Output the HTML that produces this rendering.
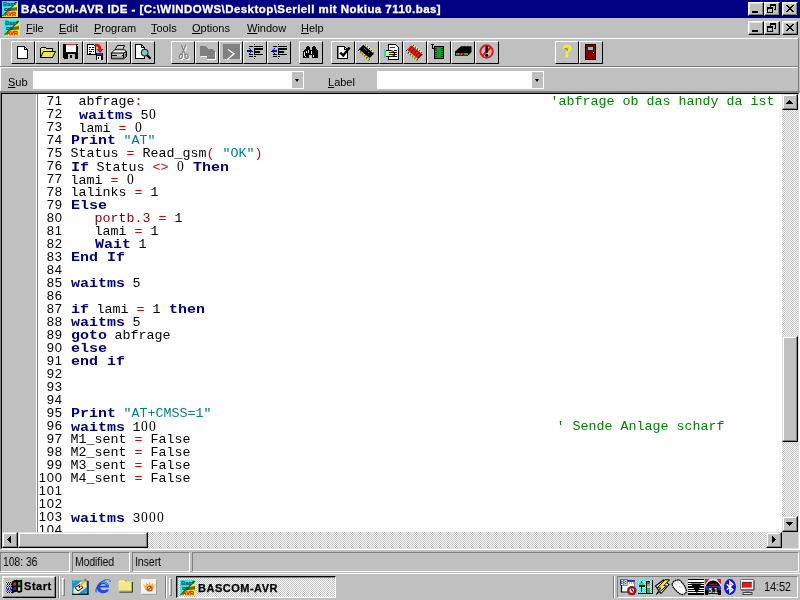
<!DOCTYPE html>
<html><head><meta charset="utf-8"><title>BASCOM-AVR IDE</title>
<style>
*{box-sizing:border-box;margin:0;padding:0}
html,body{width:800px;height:600px;overflow:hidden;background:#c0c0c0;font-family:"Liberation Sans",sans-serif;font-size:11px;color:#000}
.abs,#root div,#root span.abs{position:absolute}
#root{position:relative;width:800px;height:600px;overflow:hidden}
#title{left:0;top:0;width:800px;height:18px;background:#000080}
#title .t{left:20.5px;top:1.5px;color:#fff;-webkit-text-stroke:.3px #fff;font-weight:bold;font-size:11.5px;letter-spacing:.44px;white-space:nowrap;line-height:14px}
.cb{width:16px;height:14px;background:#c0c0c0;border:1px solid;border-color:#fff #000 #000 #fff;box-shadow:inset -1px -1px 0 #808080,inset 1px 1px 0 #dfdfdf}
#menu{left:0;top:18px;width:800px;height:20px}
#menu span{position:absolute;top:4px;line-height:13px;font-size:11px;white-space:nowrap}
#menu span u{text-decoration:underline}
.hl{left:0;width:800px;height:1px}
.tb{width:24px;height:23px;background:#c0c0c0;border:1px solid;border-color:#fff #000 #000 #fff;top:41px}
.tb svg{position:absolute;left:-1px;top:-1px;width:24px;height:23px}
.tb.s1 svg{left:0}
.combo{background:#fff;height:18px;top:71px}
.combo .dd{right:1px;top:1px;width:11px;height:16px;background:#c0c0c0}
.combo .dd:after{content:"";position:absolute;left:3px;top:7px;border:2.5px solid transparent;border-top:3px solid #000;border-bottom:none;width:0;height:0}
#ed{left:0;top:92px;width:800px;height:458px;border:1px solid;border-color:#808080 #fff #fff #808080}
#edi{left:0;top:0;width:798px;height:456px;border:1px solid;border-color:#000 #dfdfdf #dfdfdf #000;background:#fff;overflow:hidden}
#gut{left:0;top:0;width:34px;height:438px;background:#c0c0c0}
#code{left:0;top:0;width:780px;height:438px;overflow:hidden}
.ln{left:0;width:780px;height:13px;line-height:13px;white-space:pre}
.ln .no{position:absolute;right:719.3px;top:0;font-size:13px;letter-spacing:.77px;font-family:"Liberation Sans",sans-serif}
.ln .tx{position:absolute;left:68.5px;top:1px;font-family:"Liberation Mono",monospace;font-size:13.33px}
.tx b{color:#000078;display:inline-block;transform:scaleX(1.125);transform-origin:0 50%}
.tx i{color:#e00000;font-style:normal}
.tx u{color:#008080;text-decoration:none}
.tx s{color:#800000;text-decoration:none}
.tx q{display:inline-block;width:8px;text-align:center;font-family:"Liberation Serif",serif;font-size:13.6px;quotes:none}
.tx q:before,.tx q:after{content:none}
.tx em{position:absolute;top:0;color:#008000;font-style:normal}
.dith{background-image:conic-gradient(#fff 25%,#c0c0c0 0 50%,#fff 0 75%,#c0c0c0 0);background-size:2px 2px}
.sbtn{width:16px;height:16px;background:#c0c0c0;border:1px solid;border-color:#dfdfdf #000 #000 #dfdfdf;box-shadow:inset -1px -1px 0 #808080,inset 1px 1px 0 #fff}
.sp{height:20px;top:552px;border:1px solid;border-color:#808080 #fff #fff #808080}
.sp span{position:absolute;left:2px;top:1.5px;font-size:12px;line-height:14px;white-space:nowrap;transform:scaleX(.86);transform-origin:0 0}
#task{left:0;top:572px;width:800px;height:28px;background:#c0c0c0}
.grip{width:3px;height:18px;top:6px;border:1px solid;border-color:#fff #808080 #808080 #fff}
.etch{width:2px;height:22px;top:4px;border-left:1px solid #808080;border-right:1px solid #fff}
#title .t,#menu span,#code,.lbl,#task span,.sp span{will-change:transform}
</style></head><body><div id="root">

<div id="title">
 <div class="abs" style="left:2px;top:1px;width:16px;height:16px"><svg width="16" height="16" viewBox="0 0 16 16" style="display:block"><rect width="16" height="16" fill="#f4ec28"/><polygon points="0,0 15,0 0,15" fill="#3fe6f2"/><polygon points="8,7.2 15,6 15,9.5 5,10.2" fill="#6a6a10"/><polygon points="11,3 14,0.5 14,3.5" fill="#101010"/><line x1="0.5" y1="15" x2="15" y2="1" stroke="#0a6a6a" stroke-width="1.2"/><text x="1.2" y="4.6" font-family="Liberation Sans" font-weight="bold" font-size="5.6" fill="#056b6b" stroke="#056b6b" stroke-width=".3">Bas</text><text x="2.2" y="9.6" font-family="Liberation Sans" font-weight="bold" font-size="5.6" fill="#0a4a3a" stroke="#0a4a3a" stroke-width=".3">co</text><text x="2.6" y="15.4" font-family="Liberation Sans" font-weight="bold" font-size="5.8" fill="#d82000" stroke="#d83000" stroke-width=".35" textLength="11.5" lengthAdjust="spacingAndGlyphs">AVR</text></svg></div>
 <div class="t">BASCOM-AVR IDE - [C:\WINDOWS\Desktop\Seriell mit Nokiua 7110.bas]</div>
 <div class="cb" style="left:748px;top:2px"><svg width="14" height="12" viewBox="0 0 14 12" shape-rendering="crispEdges" style="position:absolute;left:0;top:0"><rect x="3" y="8" width="6" height="2" fill="#000"/></svg></div>
 <div class="cb" style="left:764px;top:2px"><svg width="14" height="12" viewBox="0 0 14 12" shape-rendering="crispEdges" style="position:absolute;left:0;top:0"><path d="M5,1h6v2h-6zM5,3h1v1h-1zM10,3h1v4h-1zM9,6h1v1h-1z M2,4h6v2h-6z M2,6h1v4h-1z M7,6h1v4h-1z M2,9h6v1h-6z" fill="#000"/></svg></div>
 <div class="cb" style="left:782px;top:2px"><svg width="14" height="12" viewBox="0 0 14 12" shape-rendering="crispEdges" style="position:absolute;left:0;top:0"><path d="M3,2h2v1h-2zM9,2h2v1h-2zM4,3h2v1h-2zM8,3h2v1h-2zM5,4h4v1h-4zM6,5h2v1h-2zM5,6h4v1h-4zM4,7h2v1h-2zM8,7h2v1h-2zM3,8h2v1h-2zM9,8h2v1h-2z" fill="#000"/></svg></div>
</div>

<div id="menu">
 <div class="abs" style="left:4px;top:2px;width:16px;height:16px"><svg width="16" height="16" viewBox="0 0 16 16" style="display:block"><rect width="16" height="16" fill="#f4ec28"/><polygon points="0,0 15,0 0,15" fill="#3fe6f2"/><polygon points="8,7.2 15,6 15,9.5 5,10.2" fill="#6a6a10"/><polygon points="11,3 14,0.5 14,3.5" fill="#101010"/><line x1="0.5" y1="15" x2="15" y2="1" stroke="#0a6a6a" stroke-width="1.2"/><text x="1.2" y="4.6" font-family="Liberation Sans" font-weight="bold" font-size="5.6" fill="#056b6b" stroke="#056b6b" stroke-width=".3">Bas</text><text x="2.2" y="9.6" font-family="Liberation Sans" font-weight="bold" font-size="5.6" fill="#0a4a3a" stroke="#0a4a3a" stroke-width=".3">co</text><text x="2.6" y="15.4" font-family="Liberation Sans" font-weight="bold" font-size="5.8" fill="#d82000" stroke="#d83000" stroke-width=".35" textLength="11.5" lengthAdjust="spacingAndGlyphs">AVR</text></svg></div>
 <span style="left:25.5px"><u>F</u>ile</span>
 <span style="left:58.5px"><u>E</u>dit</span>
 <span style="left:93.5px"><u>P</u>rogram</span>
 <span style="left:151px"><u>T</u>ools</span>
 <span style="left:192px"><u>O</u>ptions</span>
 <span style="left:247px"><u>W</u>indow</span>
 <span style="left:301px"><u>H</u>elp</span>
 <div class="cb" style="left:748px;top:3px"><svg width="14" height="12" viewBox="0 0 14 12" shape-rendering="crispEdges" style="position:absolute;left:0;top:0"><rect x="3" y="8" width="6" height="2" fill="#000"/></svg></div>
 <div class="cb" style="left:764px;top:3px"><svg width="14" height="12" viewBox="0 0 14 12" shape-rendering="crispEdges" style="position:absolute;left:0;top:0"><path d="M5,1h6v2h-6zM5,3h1v1h-1zM10,3h1v4h-1zM9,6h1v1h-1z M2,4h6v2h-6z M2,6h1v4h-1z M7,6h1v4h-1z M2,9h6v1h-6z" fill="#000"/></svg></div>
 <div class="cb" style="left:782px;top:3px"><svg width="14" height="12" viewBox="0 0 14 12" shape-rendering="crispEdges" style="position:absolute;left:0;top:0"><path d="M3,2h2v1h-2zM9,2h2v1h-2zM4,3h2v1h-2zM8,3h2v1h-2zM5,4h4v1h-4zM6,5h2v1h-2zM5,6h4v1h-4zM4,7h2v1h-2zM8,7h2v1h-2zM3,8h2v1h-2zM9,8h2v1h-2z" fill="#000"/></svg></div>
</div>
<div class="hl" style="top:38px;background:#fff"></div>
<div class="abs" style="left:0;top:38px;width:1px;height:28px;background:#fff"></div>

<!-- toolbar -->
<div class="tb" style="left:11px"><svg viewBox="0 0 24 23" shape-rendering="crispEdges"><path d="M6.5,5.5H13.5L16.5,8.5V17.5H6.5Z" fill="#fff" stroke="#000"/><path d="M13.5,5.5V8.5H16.5" fill="none" stroke="#000"/></svg></div>
<div class="tb" style="left:35px"><svg viewBox="0 0 24 23" shape-rendering="crispEdges"><path d="M5.5,16.5V7.5L6.5,6.5H10.5L11.5,7.5H17.5V10.5" fill="#e4e468" stroke="#000"/><path d="M5.5,16.5L8.5,10.5H20.5L17.5,16.5Z" fill="#e4e468" stroke="#000" shape-rendering="auto"/><path d="M5,16.5H18" stroke="#000"/></svg></div>
<div class="tb" style="left:59px"><svg viewBox="0 0 24 23" shape-rendering="crispEdges"><path d="M4,3H19V18H5L4,17Z" fill="#000"/><rect x="7" y="3" width="10" height="8" fill="#fff"/><rect x="7" y="3" width="10" height="1.4" fill="#e03030"/><rect x="9" y="13" width="7" height="5" fill="#c0c0c0"/><rect x="11" y="14" width="2" height="3" fill="#000"/><rect x="17.6" y="4" width="1" height="1.4" fill="#b0b0b0"/></svg></div>
<div class="tb" style="left:83px"><svg viewBox="0 0 24 23" shape-rendering="crispEdges"><path d="M4.5,3.5H10.5L12.5,5.5V13.5H4.5Z" fill="#fff" stroke="#000"/><path d="M6,6h2v1h-2zM9,6h2v1h-2zM6,8h1v1h-1zM8,8h3v1h-3zM6,10h3v1h-3zM10,10h1v1h-1zM6,12h2v0.6h-2z" fill="#000"/><path d="M12,4.3C15.5,3.6 17,5 17,8.4" fill="none" stroke="#e01010" stroke-width="3" shape-rendering="auto"/><polygon points="13.4,8 20.6,8 17,12" fill="#e01010" shape-rendering="auto"/><rect x="12.5" y="11.6" width="7.4" height="7" fill="#000"/><rect x="13.5" y="11.6" width="5.4" height="2" fill="#2828d0"/><rect x="14.4" y="15" width="3.6" height="3.6" fill="#fff"/><rect x="15.2" y="16" width="1" height="2" fill="#000"/></svg></div>
<div class="tb" style="left:107px"><svg viewBox="0 0 24 23" shape-rendering="auto"><polygon points="8,9 10.5,4.5 17.5,4.5 15.5,9" fill="#fff" stroke="#000" stroke-width="1"/><polygon points="4.5,12 7.5,9 17.5,9 19.5,10.5 19.5,15.5 16.5,17.8 4.5,17.8" fill="#c8c8c8" stroke="#000" stroke-width="1"/><polygon points="5.6,11.6 7.8,9.6 17,9.6 18.4,10.6 16.4,11.6" fill="#fff"/><path d="M4.5,12H16.5L19.5,10.5M16.5,12V17.5" fill="none" stroke="#000"/><path d="M5,14.5H16" stroke="#000" stroke-width="1"/><path d="M10,14.5H15" stroke="#e0e040" stroke-width="1.2"/><path d="M5,16.2H16" stroke="#808080"/><path d="M10.5,6H16M10,7.5H15" stroke="#808080" stroke-width=".7"/><path d="M17.6,12.4L19,11.4M17.6,14L19,13M17.6,15.6L19,14.6" stroke="#000" stroke-width=".8"/></svg></div>
<div class="tb" style="left:131px"><svg viewBox="0 0 24 23" shape-rendering="crispEdges"><path d="M4.5,3.5H10.5L13.5,6.5V17.5H4.5Z" fill="#fff" stroke="#000"/><path d="M10.5,3.5V6.5H13.5" fill="none" stroke="#000"/><circle cx="13.7" cy="11.6" r="3.3" fill="#8cc8c4" stroke="#303838" stroke-width="1.2" shape-rendering="auto"/><path d="M16.2,14.3L19.6,17.7" stroke="#000" stroke-width="2.2" shape-rendering="auto"/></svg></div>
<div class="tb" style="left:171px"><svg viewBox="0 0 24 23" shape-rendering="auto"><g fill="none" stroke="#fff" stroke-width="1.1" transform="translate(1,1)"><path d="M10.5,4L12.6,9.5L14.7,4M12.6,9.5L10.8,13.2M12.6,9.5L14.6,13.2"/><ellipse cx="9.9" cy="15.3" rx="1.5" ry="2.3" transform="rotate(15 9.9 15.3)"/><ellipse cx="15.6" cy="15.3" rx="1.5" ry="2.3" transform="rotate(-15 15.6 15.3)"/></g><g fill="none" stroke="#808080" stroke-width="1.2"><path d="M10.5,4L12.6,9.5L14.7,4M12.6,9.5L10.8,13.2M12.6,9.5L14.6,13.2"/><ellipse cx="9.9" cy="15.3" rx="1.5" ry="2.3" transform="rotate(15 9.9 15.3)"/><ellipse cx="15.6" cy="15.3" rx="1.5" ry="2.3" transform="rotate(-15 15.6 15.3)"/></g></svg></div>
<div class="tb s1" style="left:195px"><svg viewBox="0 0 24 23" shape-rendering="crispEdges"><path d="M5,15.5H11.5" stroke="#fff"/><path d="M11,18.5H19.5V11" stroke="#fff" fill="none"/><path d="M4,5H9.5L12,7.5H16L19,10.5V18H10.5V15H4Z" fill="#808080"/></svg></div>
<div class="tb s1" style="left:219px"><svg viewBox="0 0 24 23" shape-rendering="crispEdges"><rect x="3" y="3" width="17" height="15.4" fill="#808080"/><path d="M20.5,3V18.5" stroke="#fff"/><path d="M5,18.2h1v1h-1zM7,18.2h1v1h-1z" fill="#fff"/><path d="M8,8.5L14,12.8L7.6,18.3" fill="none" stroke="#fff" stroke-width="1.3" shape-rendering="auto"/></svg></div>
<div class="tb" style="left:243px"><svg viewBox="0 0 24 23" shape-rendering="crispEdges"><path d="M11,3h1v1h-1zM11,9h1v1h-1zM11,17h1v1h-1zM11,15h1v1h-1zM11,12h1v1h-1z" fill="#000"/><path d="M6,5h4v1h-4zM11,5h9v1h-9zM11,7h9v2h-9zM11,10h6v2h-6zM6,13h4v1h-4zM11,13h9v1h-9zM6,15h4v1h-4zM11,15h2v1h-2z" fill="#000"/><path d="M4,9h3v2h-3zM7,8h1v4h-1zM8,9h1v2h-1zM9,9.5h1v1h-1zM6,7.4h1v.6h-1zM6,12h1v.6h-1z" fill="#1010b0"/></svg></div>
<div class="tb" style="left:267px"><svg viewBox="0 0 24 23" shape-rendering="crispEdges"><path d="M11,3h1v1h-1zM11,9h1v1h-1zM11,17h1v1h-1zM11,15h1v1h-1zM11,12h1v1h-1z" fill="#000"/><path d="M6,5h4v1h-4zM11,5h9v1h-9zM11,7h9v2h-9zM11,10h6v2h-6zM6,13h4v1h-4zM11,13h9v1h-9zM6,15h4v1h-4zM11,15h2v1h-2z" fill="#000"/><path d="M6,9h3.6v2h-3.6zM6,8h1v4h-1zM5,9h1v2h-1zM4,9.5h1v1h-1zM7,7.4h1v.6h-1zM7,12h1v.6h-1z" fill="#1010b0"/></svg></div>
<div class="tb" style="left:299px"><svg viewBox="0 0 24 23" shape-rendering="crispEdges"><path d="M8,5h2v1h-2zM14,5h2v1h-2zM7,6h4v2h-4zM13,6h4v2h-4zM6,8h5v1h-5zM13,8h5v1h-5zM5,9h14v1h-14zM4,10h15v4h-15zM4,14h6v3h-6zM13,14h6v3h-6z" fill="#000"/><path d="M5,11h1v4h-1zM7,10h1v2h-1zM9,9h1v3h-1zM12,10h1v3h-1zM14,14h1v2h-1zM6,15h1v1h-1z" fill="#e8e8e8"/></svg></div>
<div class="tb" style="left:331px"><svg viewBox="0 0 24 23" shape-rendering="crispEdges"><path d="M6.5,5.5H13.5L16.5,8.5V17.5H6.5Z" fill="#fff" stroke="#000"/><path d="M13.5,5.5V8.5H16.5" fill="none" stroke="#000"/><path d="M7,5.5V17" stroke="#808080"/><path d="M9.2,11.6L12.2,14.4L18.6,6.4" fill="none" stroke="#000" stroke-width="2.4" shape-rendering="auto"/></svg></div>
<div class="tb" style="left:355px"><svg viewBox="0 0 24 23" shape-rendering="auto"><polygon points="8.3,3.8 9.9,2.5 20.4,11.3 19,12.7" fill="#f0f0a8" opacity=".9"/><polygon points="3.8,8.3 14.6,17.1 13.2,18.7 2.5,9.8" fill="#e4e450" opacity=".75"/><polygon points="3.8,8.3 8.3,3.8 19,12.7 14.6,17.1" fill="#000"/><rect x="9.70" y="3.50" width="1" height="1" fill="#000"/><rect x="11.85" y="5.30" width="1" height="1" fill="#000"/><rect x="14.00" y="7.10" width="1" height="1" fill="#000"/><rect x="16.15" y="8.90" width="1" height="1" fill="#000"/><rect x="18.30" y="10.70" width="1" height="1" fill="#000"/><rect x="3.00" y="8.70" width="1" height="1" fill="#000"/><rect x="5.15" y="10.50" width="1" height="1" fill="#000"/><rect x="7.30" y="12.30" width="1" height="1" fill="#000"/><rect x="9.45" y="14.10" width="1" height="1" fill="#000"/><rect x="11.60" y="15.90" width="1" height="1" fill="#000"/><rect x="13.75" y="17.70" width="1" height="1" fill="#000"/><rect x="4.60" y="11.60" width="1" height="1" fill="#787800"/><rect x="6.75" y="13.40" width="1" height="1" fill="#787800"/><rect x="8.90" y="15.20" width="1" height="1" fill="#787800"/><rect x="11.05" y="17.00" width="1" height="1" fill="#787800"/><rect x="13.20" y="18.80" width="1" height="1" fill="#787800"/><path d="M9.2,7.2L12,9.6" stroke="#a0a0a0" stroke-width="1" stroke-dasharray="1 .6"/><rect x="13.2" y="11" width="1" height="1" fill="#808080"/></svg></div>
<div class="tb" style="left:379px"><svg viewBox="0 0 24 23" shape-rendering="crispEdges"><path d="M9.5,3.5H16.5L19.5,6.5V18.5H9.5Z" fill="#fff" stroke="#000"/><path d="M11,6h5v1.4h-5z" fill="#2020c0"/><path d="M15,9h3v1h-3zM15,11h3v1h-3zM15,13h3v1h-3zM13,15h5v1h-5z" fill="#000"/><path d="M6.5,9.5H12L14.5,10.5V12H15.5V14.5L13,15.5H6.5Z" fill="#ecec60" stroke="#000" shape-rendering="auto"/><rect x="4.5" y="9" width="2" height="7" fill="#30d0e0"/><path d="M10,11.5h5M10,13.2h5" stroke="#000" stroke-width=".8"/></svg></div>
<div class="tb" style="left:403px"><svg viewBox="0 0 24 23" shape-rendering="auto"><g transform="translate(0,.4)"><polygon points="8.3,3.8 9.9,2.5 20.4,11.3 19,12.7" fill="#f0f0a8" opacity=".9"/><polygon points="3.8,8.3 14.6,17.1 13.2,18.7 2.5,9.8" fill="#e4e450" opacity=".75"/><polygon points="3.8,8.3 8.3,3.8 19,12.7 14.6,17.1" fill="#dc2020"/><rect x="9.70" y="3.50" width="1" height="1" fill="#000"/><rect x="11.85" y="5.30" width="1" height="1" fill="#000"/><rect x="14.00" y="7.10" width="1" height="1" fill="#000"/><rect x="16.15" y="8.90" width="1" height="1" fill="#000"/><rect x="18.30" y="10.70" width="1" height="1" fill="#000"/><rect x="3.00" y="8.70" width="1" height="1" fill="#000"/><rect x="5.15" y="10.50" width="1" height="1" fill="#000"/><rect x="7.30" y="12.30" width="1" height="1" fill="#000"/><rect x="9.45" y="14.10" width="1" height="1" fill="#000"/><rect x="11.60" y="15.90" width="1" height="1" fill="#000"/><rect x="13.75" y="17.70" width="1" height="1" fill="#000"/><rect x="4.60" y="11.60" width="1" height="1" fill="#787800"/><rect x="6.75" y="13.40" width="1" height="1" fill="#787800"/><rect x="8.90" y="15.20" width="1" height="1" fill="#787800"/><rect x="11.05" y="17.00" width="1" height="1" fill="#787800"/><rect x="13.20" y="18.80" width="1" height="1" fill="#787800"/><path d="M6.2,9.2C7.0,6.8 8.6,5.6 10.2,5.6" stroke="#780808" stroke-width="1" fill="none"/><path d="M8.5,11.1C9.3,8.7 10.9,7.5 12.5,7.5" stroke="#780808" stroke-width="1" fill="none"/><path d="M10.8,13.0C11.6,10.6 13.2,9.4 14.8,9.4" stroke="#780808" stroke-width="1" fill="none"/><path d="M13.1,14.9C13.9,12.5 15.5,11.3 17.1,11.3" stroke="#780808" stroke-width="1" fill="none"/><path d="M15.4,16.8C16.2,14.4 17.8,13.2 19.4,13.2" stroke="#780808" stroke-width="1" fill="none"/><path d="M14.6,17.1L19,12.7" stroke="#300" stroke-width="1.2"/></g></svg></div>
<div class="tb" style="left:427px"><svg viewBox="0 0 24 23" shape-rendering="crispEdges"><path d="M4,3.5H7M5.5,3.5V7.5H8" fill="none" stroke="#000"/><rect x="7.5" y="5.5" width="9" height="12" fill="#10a028" stroke="#000"/><path d="M8,7h2v1h-2zM8,9h2v1h-2zM8,11h2v1h-2zM8,13h2v1h-2zM8,15h2v1h-2zM14,7h2v1h-2zM14,9h2v1h-2zM14,11h2v1h-2zM14,13h2v1h-2zM14,15h2v1h-2z" fill="#005010"/></svg></div>
<div class="tb" style="left:451px"><svg viewBox="0 0 24 23" shape-rendering="auto"><polygon points="4,10.5 10,5.2 20.5,5.2 20.5,11 17,14.8 4,14.8" fill="#000"/><path d="M5,13h2.2M13,13h4" stroke="#40e040" stroke-width="1.7"/><path d="M8,13h2M10.6,13h2" stroke="#e83030" stroke-width="1.7"/><path d="M7.2,13h.8M10,13h.6" stroke="#f0c0c0" stroke-width="1.7"/></svg></div>
<div class="tb" style="left:475px"><svg viewBox="0 0 24 23" shape-rendering="auto"><circle cx="11.6" cy="10.5" r="6.2" fill="none" stroke="#e41818" stroke-width="2"/><path d="M7.2,15L16,6.2" stroke="#e41818" stroke-width="2"/><path d="M11.7,5.2v6.4" stroke="#000" stroke-width="2.6"/><circle cx="11.7" cy="14.2" r="1.5" fill="#000"/></svg></div>
<div class="tb" style="left:555px"><svg viewBox="0 0 24 23" shape-rendering="auto"><text x="6.7" y="16.4" font-family="Liberation Sans" font-weight="bold" font-size="16.5" fill="#f4f020" stroke="#f4f020" stroke-width=".5">?</text><path d="M9.4,7.6h2.8v2.4" fill="none" stroke="#808070" stroke-width="1"/></svg></div>
<div class="tb" style="left:579px"><svg viewBox="0 0 24 23" shape-rendering="crispEdges"><rect x="6.5" y="3.5" width="10" height="15" fill="#800000" stroke="#000"/><rect x="9" y="6" width="5" height="3" fill="#30e0e8"/><rect x="14" y="11" width="1" height="1" fill="#fff"/></svg></div>
<div class="hl" style="top:66px;background:#808080"></div>
<div class="hl" style="top:67px;background:#fff"></div>

<div class="abs" style="left:798px;top:38px;width:1px;height:54px;background:#808080"></div>
<div class="abs" style="left:799px;top:38px;width:1px;height:54px;background:#c0c0c0"></div>
<!-- sub/label row -->
<span class="abs lbl" style="left:8px;top:75.5px;font-size:11px;line-height:13px"><u>S</u>ub</span>
<div class="combo" style="left:33px;width:271px"><div class="dd"></div></div>
<span class="abs lbl" style="left:328px;top:75.5px;font-size:11px;line-height:13px"><u>L</u>abel</span>
<div class="combo" style="left:377px;width:167px"><div class="dd"></div></div>

<div class="hl" style="top:91px;background:#808080"></div>
<div class="abs" style="left:0;top:68px;width:1px;height:23px;background:#fff"></div>
<!-- editor -->
<div id="ed"><div id="edi">
 <div id="gut"></div><div style="left:35px;top:0;width:1px;height:438px;background:#808080"></div>
 <div id="code">
<div class="ln" style="top:0px"><span class="no">71</span><span class="tx"> abfrage<i>:</i><em style="left:480px">'abfrage ob das handy da ist</em></span></div>
<div class="ln" style="top:13px"><span class="no">72</span><span class="tx"> <b style="margin-right:6px">waitms</b> 5<q>0</q></span></div>
<div class="ln" style="top:26px"><span class="no">73</span><span class="tx"> lami <i>=</i> <q>0</q></span></div>
<div class="ln" style="top:39px"><span class="no">74</span><span class="tx"><b style="margin-right:5px">Print</b> <u>"AT"</u></span></div>
<div class="ln" style="top:52px"><span class="no">75</span><span class="tx">Status <i>=</i> Read_gsm<i>(</i> <u>"OK"</u><i>)</i></span></div>
<div class="ln" style="top:65px"><span class="no">76</span><span class="tx"><b style="margin-right:2px">If</b> Status <i>&lt;&gt;</i> <q>0</q> <b style="margin-right:4px">Then</b></span></div>
<div class="ln" style="top:78px"><span class="no">77</span><span class="tx">lami <i>=</i> <q>0</q></span></div>
<div class="ln" style="top:91px"><span class="no">78</span><span class="tx">lalinks <i>=</i> 1</span></div>
<div class="ln" style="top:104px"><span class="no">79</span><span class="tx"><b style="margin-right:4px">Else</b></span></div>
<div class="ln" style="top:117px"><span class="no">80</span><span class="tx">   <s>portb</s><i>.</i><s>3</s> <i>=</i> 1</span></div>
<div class="ln" style="top:130px"><span class="no">81</span><span class="tx">   lami <i>=</i> 1</span></div>
<div class="ln" style="top:143px"><span class="no">82</span><span class="tx">   <b style="margin-right:4px">Wait</b> 1</span></div>
<div class="ln" style="top:156px"><span class="no">83</span><span class="tx"><b style="margin-right:6px">End If</b></span></div>
<div class="ln" style="top:169px"><span class="no">84</span><span class="tx"></span></div>
<div class="ln" style="top:182px"><span class="no">85</span><span class="tx"><b style="margin-right:6px">waitms</b> 5</span></div>
<div class="ln" style="top:195px"><span class="no">86</span><span class="tx"></span></div>
<div class="ln" style="top:208px"><span class="no">87</span><span class="tx"><b style="margin-right:2px">if</b> lami <i>=</i> 1 <b style="margin-right:4px">then</b></span></div>
<div class="ln" style="top:221px"><span class="no">88</span><span class="tx"><b style="margin-right:6px">waitms</b> 5</span></div>
<div class="ln" style="top:234px"><span class="no">89</span><span class="tx"><b style="margin-right:4px">goto</b> abfrage</span></div>
<div class="ln" style="top:247px"><span class="no">90</span><span class="tx"><b style="margin-right:4px">else</b></span></div>
<div class="ln" style="top:260px"><span class="no">91</span><span class="tx"><b style="margin-right:6px">end if</b></span></div>
<div class="ln" style="top:273px"><span class="no">92</span><span class="tx"></span></div>
<div class="ln" style="top:286px"><span class="no">93</span><span class="tx"></span></div>
<div class="ln" style="top:299px"><span class="no">94</span><span class="tx"></span></div>
<div class="ln" style="top:312px"><span class="no">95</span><span class="tx"><b style="margin-right:5px">Print</b> <u>"AT+CMSS=1"</u></span></div>
<div class="ln" style="top:325px"><span class="no">96</span><span class="tx"><b style="margin-right:6px">waitms</b> 1<q>0</q><q>0</q><em style="left:486px">' Sende Anlage scharf</em></span></div>
<div class="ln" style="top:338px"><span class="no">97</span><span class="tx">M1_sent <i>=</i> False</span></div>
<div class="ln" style="top:351px"><span class="no">98</span><span class="tx">M2_sent <i>=</i> False</span></div>
<div class="ln" style="top:364px"><span class="no">99</span><span class="tx">M3_sent <i>=</i> False</span></div>
<div class="ln" style="top:377px"><span class="no">100</span><span class="tx">M4_sent <i>=</i> False</span></div>
<div class="ln" style="top:390px"><span class="no">101</span><span class="tx"></span></div>
<div class="ln" style="top:403px"><span class="no">102</span><span class="tx"></span></div>
<div class="ln" style="top:416px"><span class="no">103</span><span class="tx"><b style="margin-right:6px">waitms</b> 3<q>0</q><q>0</q><q>0</q></span></div>
<div class="ln" style="top:429px"><span class="no">104</span><span class="tx"></span></div>
 </div>
 <!-- vscroll -->
 <div class="dith" style="left:780px;top:0;width:16px;height:438px"></div>
 <div class="sbtn" style="left:780px;top:0"><svg width="14" height="14" viewBox="0 0 14 14" shape-rendering="crispEdges" style="position:absolute;left:0;top:0"><path d="M6,5h1v1h-1zM5,6h3v1h-3zM4,7h5v1h-5zM3,8h7v1h-7z" fill="#000"/></svg></div>
 <div class="sbtn" style="left:780px;top:242px;height:106px"></div>
 <div class="sbtn" style="left:780px;top:422px"><svg width="14" height="14" viewBox="0 0 14 14" shape-rendering="crispEdges" style="position:absolute;left:0;top:0"><path d="M3,5h7v1h-7zM4,6h5v1h-5zM5,7h3v1h-3zM6,8h1v1h-1z" fill="#000"/></svg></div>
 <!-- hscroll -->
 <div class="dith" style="left:0;top:438px;width:780px;height:16px"></div>
 <div class="sbtn" style="left:0;top:438px"><svg width="14" height="14" viewBox="0 0 14 14" shape-rendering="crispEdges" style="position:absolute;left:0;top:0"><path d="M7,3h1v7h-1zM6,4h1v5h-1zM5,5h1v3h-1zM4,6h1v1h-1z" fill="#000"/></svg></div>
 <div class="sbtn" style="left:16px;top:438px;width:130px"></div>
 <div class="sbtn" style="left:764px;top:438px"><svg width="14" height="14" viewBox="0 0 14 14" shape-rendering="crispEdges" style="position:absolute;left:0;top:0"><path d="M5,3h1v7h-1zM6,4h1v5h-1zM7,5h1v3h-1zM8,6h1v1h-1z" fill="#000"/></svg></div>
 <div style="left:780px;top:438px;width:16px;height:16px;background:#c0c0c0"></div>
</div></div>

<!-- status bar -->
<div class="sp" style="left:0;width:70px"><span>108: 36</span></div>
<div class="sp" style="left:72px;width:58px"><span>Modified</span></div>
<div class="sp" style="left:132px;width:58px"><span>Insert</span></div>
<div class="sp" style="left:192px;width:607px"></div>

<!-- taskbar -->
<div id="task">
 <div class="hl" style="top:1px;background:#fff"></div>
 <div class="abs" style="left:2px;top:4px;width:54px;height:22px;border:1px solid;border-color:#fff #000 #000 #fff;box-shadow:inset -1px -1px 0 #808080,inset 1px 1px 0 #dfdfdf">
   <div class="abs" style="left:3px;top:2px;width:16px;height:16px"><svg width="17" height="16" viewBox="0 0 17 16" style="position:absolute;left:0;top:0"><g shape-rendering="crispEdges"><path d="M1,4h1v1h-1zM3,4h1v1h-1zM5,4h1v1h-1zM0,6h1v1h-1zM2,6h1v1h-1zM4,6h1v1h-1z" fill="#e02020"/><path d="M1,5h1v1h-1zM3,5h1v1h-1zM5,5h1v1h-1zM1,7h1v1h-1zM3,7h1v1h-1zM5,7h1v1h-1zM1,13h1v1h-1zM3,13h1v1h-1zM5,13h1v1h-1zM0,3h1v1h-1zM2,3h1v1h-1zM4,3h1v1h-1z" fill="#000"/><path d="M0,9h1v1h-1zM2,9h1v1h-1zM4,9h1v1h-1zM1,11h1v1h-1zM3,11h1v1h-1zM5,11h1v1h-1zM1,10h2v1h-2zM4,10h2v1h-2z" fill="#2020e0"/><path d="M0,8h1v1h-1zM2,8h1v1h-1zM4,8h1v1h-1zM0,12h1v1h-1zM2,12h1v1h-1zM4,12h1v1h-1z" fill="#e02020"/></g><path d="M5.800,3C7.800,1 10,0.300 12,1C13.500,1.500 14.600,1.200 16.200,0.400V12.800C14.500,13.800 13.200,14 11.800,13.400C10,12.700 8,13.200 5.800,14.800Z" fill="#000"/><path d="M7.300,4C8.300,3.300 9.300,3.100 10.300,3.200V6.200C9.300,6.100 8.300,6.400 7.300,7Z" fill="#e82020"/><path d="M12.200,3C13,3.200 13.600,3.100 14.300,2.800V6.200C13.600,6.500 13,6.600 12.200,6.400Z" fill="#20d020"/><path d="M7.300,8.800C8.300,8.100 9.300,7.900 10.300,8V11C9.300,10.900 8.300,11.200 7.300,11.800Z" fill="#2020e8"/><path d="M12.200,8.100C13,8.300 13.600,8.200 14.300,7.900V11.600C13.600,11.900 13,12 12.200,11.800Z" fill="#f0f020"/></svg></div>
   <span class="abs" style="left:21px;top:3px;font-weight:bold;font-size:11px;line-height:13px;letter-spacing:.55px;-webkit-text-stroke:.25px #000">Start</span>
 </div>
 <div class="etch" style="left:58px"></div><div class="grip" style="left:62px"></div>
 <div class="abs" style="left:72px;top:6px;width:16px;height:16px"><svg width="17" height="17" viewBox="0 0 17 17" style="position:absolute;left:0;top:0"><rect x="0" y="2.500" width="16" height="14" fill="#2094cc"/><path d="M0,16.500H16V3" fill="none" stroke="#101820" stroke-width="1.400"/><polygon points="1.500,10 9,3.500 14.500,3.500 14.500,9 6.500,15.500 1.500,15.500" fill="#f4ecc0"/><polygon points="3,9.500 8,6.500 11,9.500 6,13" fill="#fff" stroke="#000" stroke-width="1"/><path d="M7.500,8.500L13.600,1.800" stroke="#f0b020" stroke-width="2"/><path d="M12.800,2.600L14,1.200" stroke="#e05020" stroke-width="2"/><path d="M6.800,9.400L7.800,8.200" stroke="#000" stroke-width="1.600"/><path d="M1.500,4h1v1h-1zM13.500,14h1v1h-1zM1.500,14h1v1h-1z" fill="#80d0f0"/></svg></div>
 <div class="abs" style="left:95px;top:6px;width:16px;height:16px"><svg width="17" height="17" viewBox="0 0 17 17" style="position:absolute;left:0;top:0"><path d="M13.800,9.600H5.200C5.400,12.400 9.200,13.200 11,11.400H14C12.600,15.600 6.400,16.400 3.400,13.400C0.600,10.400 2,5.200 6.400,3.800C10.800,2.600 14.600,5.600 13.800,9.600ZM5.300,7.700H11C10.600,5.400 6,5.300 5.300,7.700Z" fill="#1c4cd8"/><path d="M6,4.600C8.500,3.600 11.500,4.600 12.600,7" fill="none" stroke="#48a8f0" stroke-width="1.300"/><path d="M1.400,14.600C-0.500,11 4,4 10,2C13,1 15.600,1.600 15.200,4" fill="none" stroke="#2858d8" stroke-width="1.100"/><path d="M11,2C13,1.200 15,1.600 15.200,3.400" fill="none" stroke="#58b0f0" stroke-width="1"/></svg></div>
 <div class="abs" style="left:118px;top:6px;width:16px;height:16px"><svg width="17" height="17" viewBox="0 0 17 17" style="position:absolute;left:0;top:0"><path d="M1.500,14.600V3.500L2.600,2.200H7L8.600,4H14.800V14.600Z" fill="#101008"/><path d="M0.600,13.400V3.200L1.800,1.900H6.400L7.800,3.500H13.800V13.400Z" fill="#f2ea84"/><path d="M0.800,13H13.600V4" fill="none" stroke="#b8b050" stroke-width="1"/><path d="M1.200,3.600H7.600" stroke="#fffad0" stroke-width=".8"/></svg></div>
 <div class="abs" style="left:141px;top:6px;width:16px;height:16px"><svg width="17" height="17" viewBox="0 0 17 17" style="position:absolute;left:0;top:0"><rect x="0" y="1" width="15.600" height="15.400" fill="#f4f2f0"/><path d="M0.500,16.300H15.500V1.500" fill="none" stroke="#a0a0a0" stroke-width="1"/><path d="M2,6L4.600,8.200L5.200,4.200L7.400,7.200L8.600,3.600L10,7.200L12.200,4.400L12,8.200L15,5.600L12.400,11.600C11,14.200 5.600,14.200 4.400,11.600Z" fill="#f4b038"/><circle cx="8.600" cy="10.600" r="2.400" fill="#fbe6c0" stroke="#dc3c28" stroke-width="1.100"/><path d="M7,12.200L10.200,9" stroke="#dc3c28" stroke-width="1.100"/></svg></div>
 <div class="etch" style="left:165px"></div><div class="grip" style="left:169px"></div>
 <div class="abs dith" style="left:176px;top:4px;width:160px;height:22px;border:1px solid;border-color:#000 #fff #fff #000;box-shadow:inset 1px 1px 0 #808080">
   <div class="abs" style="left:3px;top:3px;width:16px;height:16px"><svg width="16" height="16" viewBox="0 0 16 16" style="display:block"><rect width="16" height="16" fill="#f4ec28"/><polygon points="0,0 15,0 0,15" fill="#3fe6f2"/><polygon points="8,7.2 15,6 15,9.5 5,10.2" fill="#6a6a10"/><polygon points="11,3 14,0.5 14,3.5" fill="#101010"/><line x1="0.5" y1="15" x2="15" y2="1" stroke="#0a6a6a" stroke-width="1.2"/><text x="1.2" y="4.6" font-family="Liberation Sans" font-weight="bold" font-size="5.6" fill="#056b6b" stroke="#056b6b" stroke-width=".3">Bas</text><text x="2.2" y="9.6" font-family="Liberation Sans" font-weight="bold" font-size="5.6" fill="#0a4a3a" stroke="#0a4a3a" stroke-width=".3">co</text><text x="2.6" y="15.4" font-family="Liberation Sans" font-weight="bold" font-size="5.8" fill="#d82000" stroke="#d83000" stroke-width=".35" textLength="11.5" lengthAdjust="spacingAndGlyphs">AVR</text></svg></div>
   <span class="abs" style="left:21px;top:5px;font-weight:bold;font-size:11px;line-height:13px;letter-spacing:.5px;-webkit-text-stroke:.25px #000">BASCOM-AVR</span>
 </div>
 <div class="etch" style="left:613px"></div>
 <div class="abs" style="left:617px;top:4px;width:181px;height:22px;border:1px solid;border-color:#808080 #fff #fff #808080"></div>
 <div class="abs" style="left:620px;top:7px;width:17px;height:17px"><svg width="17" height="17" viewBox="0 0 17 17" style="position:absolute;left:0;top:0"><rect x="1.500" y="2.500" width="13" height="10.500" fill="#fff"/><path d="M1.500,6V13H8" fill="none" stroke="#000" stroke-width="1.200"/><path d="M14.600,3V8" stroke="#808080" stroke-width="1"/><rect x="7.400" y="1" width="7.400" height="1.900" fill="#2030a8"/><path d="M9,3.500h1v1h-1zM11,3.500h1v1h-1zM13,3.500h1v1h-1z" fill="#4050c0"/><rect x="0" y=".500" width="7.600" height="6" fill="#101030"/><text x=".300" y="5.700" font-family="Liberation Sans" font-weight="bold" font-size="6.400" fill="#fff" textLength="7" lengthAdjust="spacingAndGlyphs">38</text><circle cx="11.800" cy="11.600" r="3.500" fill="#fff" stroke="#a80c18" stroke-width="2.400"/><path d="M11.800,11.600V9.600M11.800,11.600L13.400,12.400" stroke="#000" stroke-width="1.100" fill="none"/><path d="M9.200,15.600L10,14.400M14.400,15.600L13.600,14.400" stroke="#a80c18" stroke-width="1.400"/></svg></div>
 <div class="abs" style="left:637px;top:7px;width:17px;height:17px"><svg width="17" height="17" viewBox="0 0 17 17" style="position:absolute;left:0;top:0"><defs><pattern id="cy" width="2" height="2" patternUnits="userSpaceOnUse"><rect width="2" height="2" fill="#fff"/><rect width="1" height="1" fill="#30e0e8"/><rect x="1" y="1" width="1" height="1" fill="#30e0e8"/></pattern></defs><g shape-rendering="crispEdges"><rect x="1" y="1" width="14" height="14" fill="url(#cy)"/><path d="M1,15h15v-14h-1v13h-14z" fill="#000"/><rect x="4" y="2" width="1" height="11" fill="#000"/><rect x="2" y="6" width="6" height="1.600" fill="#000"/><rect x="2" y="4.400" width="5" height="1.800" fill="#48e020"/><rect x="9" y="2" width="1" height="12" fill="#000"/><rect x="9" y="2" width="4" height="1" fill="#000"/><rect x="10" y="3" width="3" height="2" fill="#e02828"/><rect x="10" y="5" width="3" height="2" fill="#f08020"/><rect x="10" y="7" width="3" height="2" fill="#e8e020"/><rect x="10" y="9" width="3" height="5" fill="#30b030"/></g></svg></div>
 <div class="abs" style="left:654px;top:7px;width:17px;height:17px"><svg width="17" height="17" viewBox="0 0 17 17" style="position:absolute;left:0;top:0"><polygon points="1.500,7 9.500,1 15,5.500 7,14.500" fill="#fff" stroke="#000" stroke-width="1.100"/><polygon points="11,0.800 15.600,0.800 9.800,6.600 12.600,7 2.400,15.400 6.600,9 3.400,8.600" fill="#f4f020" stroke="#000" stroke-width="1"/><path d="M8,6.500L6.500,8" stroke="#c09010" stroke-width="1"/></svg></div>
 <div class="abs" style="left:671px;top:7px;width:17px;height:17px"><svg width="17" height="17" viewBox="0 0 17 17" style="position:absolute;left:0;top:0"><path d="M1,5.400C1.600,2.400 5.600,0.200 8.600,1.200C11.600,3.400 16,10 15.200,13C14.400,15.400 11.600,16 9.600,15.200C6.600,13.600 1.600,8.400 1,5.400Z" fill="#fff" stroke="#000" stroke-width="1.300" stroke-dasharray="1.800 .5"/><path d="M3,3.600L6,6.400M5.600,2L8.200,4.600" stroke="#b0b0b0" stroke-width=".9"/><path d="M8.600,7.400l1,1" stroke="#606060" stroke-width="1"/></svg></div>
 <div class="abs" style="left:688px;top:7px;width:17px;height:17px"><svg width="17" height="17" viewBox="0 0 17 17" shape-rendering="crispEdges" style="position:absolute;left:0;top:0"><rect x="0" y="0" width="16" height="16" fill="#fff"/><path d="M0,0h16v1.400h-16zM0,2.500h16v1.300h-16zM0,5h16v1.300h-16zM0,7.300h16v1.300h-16zM0,9.600h16v1.300h-16zM0,11.900h16v1.300h-16zM0,14.200h16v1.300h-16z" fill="#000"/><polygon points="2.800,4.400 13.600,4.400 9.400,13.800 8.400,13.800" fill="#000" shape-rendering="auto"/></svg></div>
 <div class="abs" style="left:705px;top:7px;width:17px;height:17px"><svg width="17" height="17" viewBox="0 0 17 17" style="position:absolute;left:0;top:0"><rect x="0" y="0" width="16" height="7" fill="#e8e0e0"/><polygon points="0,0 4.500,0 0,5.500" fill="#e02020"/><polygon points="16,0 11.500,0 16,5.500" fill="#e02020"/><path d="M0.500,7.500C2,3.500 5,1.500 8,1.500C11,1.500 14,3.500 15.500,7.500Z" fill="#000"/><path d="M4,5.200H12" stroke="#b01818" stroke-width="1.300"/><rect x="0" y="7.400" width="16" height="5.400" fill="#2030d0"/><rect x="0" y="11" width="3.200" height="5" fill="#000"/><rect x="12.800" y="11" width="3.200" height="5" fill="#000"/><rect x="3.200" y="8.400" width="10" height="6.600" fill="#101020"/><text x="3.600" y="14.400" font-family="Liberation Sans" font-weight="bold" font-size="7.200" fill="#f0f0c0" textLength="9" lengthAdjust="spacingAndGlyphs">5.1</text></svg></div>
 <div class="abs" style="left:722px;top:7px;width:17px;height:17px"><svg width="17" height="17" viewBox="0 0 17 17" style="position:absolute;left:0;top:0"><ellipse cx="8" cy="8" rx="6" ry="7.900" fill="#1018d0"/><path d="M4.800,5.200L10.800,10.800L8,13.400V2.600L10.800,5.200L4.800,10.800" fill="none" stroke="#fff" stroke-width="1.500" stroke-linejoin="miter"/></svg></div>
 <div class="abs" style="left:739px;top:7px;width:17px;height:17px"><svg width="17" height="17" viewBox="0 0 17 17" style="position:absolute;left:0;top:0"><rect x="1.500" y=".500" width="13.500" height="10.500" rx="1" fill="#f0f0f0" stroke="#707070" stroke-width="1"/><path d="M2,11H15V1.500" fill="none" stroke="#404040" stroke-width="1"/><rect x="3.400" y="3.400" width="9.400" height="5.200" fill="#e01828"/><path d="M3.400,8.600V3.400H12.800" fill="none" stroke="#601010" stroke-width=".9"/><rect x="6.500" y="11.500" width="4" height="2" fill="#909090"/><rect x="4" y="13.400" width="9" height="2" fill="#e8e8e8" stroke="#303030" stroke-width=".9"/></svg></div>
 <span class="abs" style="left:763.5px;top:9px;font-size:12px;line-height:13px;transform:scaleX(.9);transform-origin:0 0">14:52</span>
</div>

</div></body></html>
